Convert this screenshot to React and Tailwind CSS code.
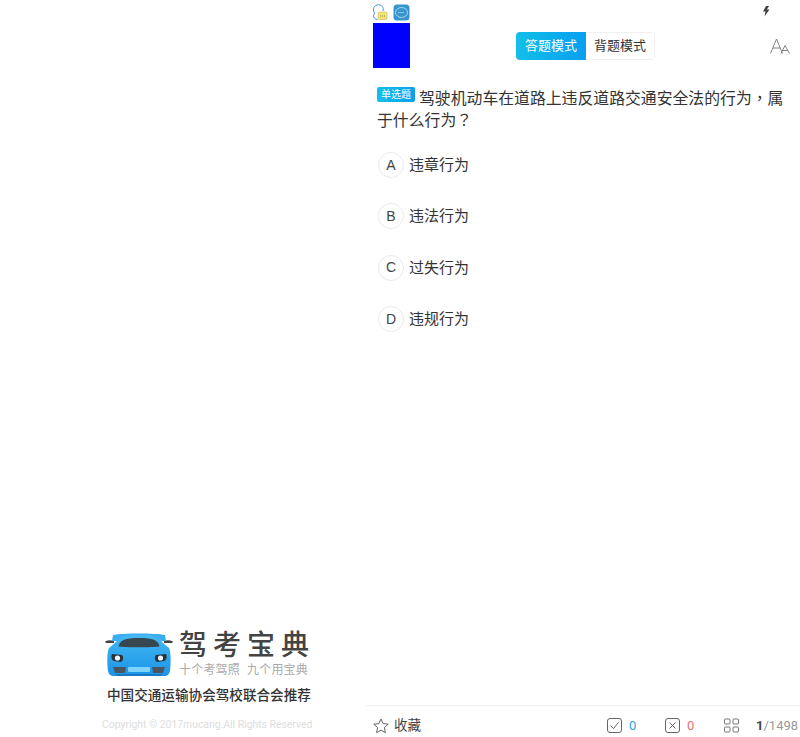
import React from 'react';

const FONT = "font-['Roboto','Noto_Sans_CJK_SC',sans-serif]";

const options = [
  { key: 'A', text: '违章行为' },
  { key: 'B', text: '违法行为' },
  { key: 'C', text: '过失行为' },
  { key: 'D', text: '违规行为' },
];

function CarLogo() {
  return (
    <svg width="68" height="44" viewBox="0 0 68 44" className="mt-px shrink-0">
      <defs>
        <linearGradient id="carBody" x1="0" y1="0" x2="0" y2="1">
          <stop offset="0" stopColor="#45b8f5" />
          <stop offset="1" stopColor="#1a94e6" />
        </linearGradient>
      </defs>
      <path d="M0 8.5 C3 7 6 7 9 8 L9 10 L1 10 Z" fill="#444" />
      <path d="M68 8.5 C65 7 62 7 59 8 L59 10 L67 10 Z" fill="#444" />
      <path d="M8 2 C18 0 50 0 60 2 L61 8 L7 8 Z" fill="#3aaef0" />
      <path d="M11 9 C13 3 20 2 34 2 C48 2 55 3 57 9 L64 15 C66 19 66 30 65 38 C64 42 62 43 59 43 L9 43 C6 43 4 42 3 38 C2 30 2 19 4 15 Z" fill="url(#carBody)" />
      <path d="M13.5 13.5 C15 7 20 5 34 5 C48 5 53 7 54.5 13.5 C48 14.5 20 14.5 13.5 13.5 Z" fill="#37474f" />
      <path d="M7 21 L17 22 C19 24 18 28 16 29 L9 28 C6 27 6 23 7 21 Z" fill="#28323a" />
      <circle cx="12.5" cy="25" r="2.6" fill="#f1f5f7" />
      <path d="M61 21 L51 22 C49 24 50 28 52 29 L59 28 C62 27 62 23 61 21 Z" fill="#28323a" />
      <circle cx="55.5" cy="25" r="2.6" fill="#f1f5f7" />
      <path d="M8 34 L21 34 L20 40 L10 40 Z" fill="#4a5560" />
      <path d="M60 34 L47 34 L48 40 L58 40 Z" fill="#4a5560" />
      <rect x="23" y="34" width="22" height="5" rx="1" fill="#7fd2fa" />
      <path d="M10 41 L58 41 L56 43 L12 43 Z" fill="#1679c4" />
    </svg>
  );
}

function HeadsetIcon() {
  return (
    <svg width="16" height="17" viewBox="0 0 16 17" fill="none">
      <path d="M2.5 9 C0 5 2 0.8 6.5 0.8 C10 0.8 12 3.5 11 7" stroke="#3f8fe8" strokeWidth="1" />
      <path d="M2.5 9 C1 12 1 15 5.5 15.5" stroke="#3f8fe8" strokeWidth="1" />
      <rect x="6" y="8" width="9" height="7.5" rx="1.5" fill="#f5e27a" stroke="#c9b84e" strokeWidth="0.6" />
      <path d="M8 12 H13" stroke="#8f8a3a" strokeWidth="1" strokeDasharray="1 1" />
    </svg>
  );
}

function AppIcon() {
  return (
    <svg width="17" height="17" viewBox="0 0 17 17" fill="none">
      <rect x="0.5" y="0.5" width="16" height="16" rx="3.5" fill="#3794cc" />
      <ellipse cx="8.5" cy="8.5" rx="6" ry="5" stroke="#a8dcf2" strokeWidth="1" />
      <path d="M5.5 8.5 H11.5" stroke="#e5f6fc" strokeWidth="1" strokeDasharray="1 1" />
    </svg>
  );
}

function FontSizeIcon() {
  return (
    <svg width="20" height="16" viewBox="0 0 20 16" fill="none" stroke="#666" strokeWidth="0.8">
      <path d="M0.5 15.5 L6.5 1 L12.5 15.5 M3 10 H10.5" />
      <path d="M11 15.5 L15 7.5 L19.5 15.5 M12.8 12.5 H18" />
    </svg>
  );
}

function Star() {
  return (
    <svg width="16" height="16" viewBox="0 0 16 16" fill="none" stroke="#555" strokeWidth="0.9" strokeLinejoin="round">
      <path d="M8 1 L10.1 5.6 L15.2 6.2 L11.4 9.6 L12.4 14.7 L8 12.1 L3.6 14.7 L4.6 9.6 L0.8 6.2 L5.9 5.6 Z" />
    </svg>
  );
}

function BoxIcon({ kind }) {
  return (
    <svg width="15" height="15" viewBox="0 0 15 15" fill="none" stroke="#555" strokeWidth="0.9">
      <rect x="0.5" y="0.5" width="14" height="14" rx="2.5" />
      {kind === 'check' ? <path d="M3.5 7.5 L6.5 10.5 L11.5 4.5" /> : <path d="M4.5 4.5 L10.5 10.5 M10.5 4.5 L4.5 10.5" />}
    </svg>
  );
}

function GridIcon() {
  return (
    <svg width="15" height="15" viewBox="0 0 15 15" fill="none" stroke="#666" strokeWidth="0.9">
      <rect x="0.5" y="1" width="5.5" height="5" rx="1" />
      <rect x="9" y="1" width="5.5" height="5" rx="1" />
      <rect x="0.5" y="9" width="5.5" height="5" rx="1" />
      <rect x="9" y="9" width="5.5" height="5" rx="1" />
    </svg>
  );
}

// centred punctuation, as in the reference
function Punct({ children }) {
  return <span className="font-['Noto_Sans_CJK_TC',sans-serif] leading-none">{children}</span>;
}

function App() {
  return (
    <div className={`${FONT} flex h-[737px] w-[800px] overflow-hidden bg-white`}>
      {/* Left: brand */}
      <div className="flex w-[366px] shrink-0 flex-col justify-end pb-[4px] pl-[102px]">
        <div className="flex w-[210px] flex-col items-end">
          <div className="flex w-[207px] items-start gap-[6px]">
            <CarLogo />
            <div className="flex flex-col">
              <div className="h-[29px] whitespace-nowrap text-[28px] font-medium leading-[28px] tracking-[6px] text-[#444]">驾考宝典</div>
              <div className="flex whitespace-nowrap text-[12px] leading-[18px] tracking-[0.2px] text-[#aaa]">
                <span>十个考驾照</span>
                <span className="ml-[7px]">九个用宝典</span>
              </div>
            </div>
          </div>
          <div className="mt-[5px] w-[207px] whitespace-nowrap pl-[2px] text-[13.6px] font-medium leading-[22px] text-[#333]">中国交通运输协会驾校联合会推荐</div>
          <div className="mt-[11px] w-[210px] whitespace-nowrap text-[10.4px] leading-[16px] text-[#ddd]">Copyright © 2017mucang.All Rights Reserved</div>
        </div>
      </div>

      {/* Right: question */}
      <div className="flex flex-1 flex-col">
        <div className="flex h-[23px] items-start justify-between pl-[6px] pr-[30px] pt-[4px]">
          <div className="flex items-center gap-[5px]">
            <HeadsetIcon />
            <AppIcon />
          </div>
          <svg width="8" height="11" viewBox="0 0 8 11" className="mt-[2px]">
            <path d="M4 0 H7 L5 3.5 H7.5 L2.5 10.5 L3.5 5.5 H1 Z" fill="#444" />
          </svg>
        </div>

        <div className="flex h-[45px] items-start pl-[7px] pr-[10px]">
          <div className="h-[45px] w-[37px] bg-[#0000ff]" />
          <div className="ml-[106px] mt-[9px] flex h-[28px] w-[139px] overflow-hidden rounded-[4px] text-[13px]">
            <div className="flex w-[70px] items-center justify-center bg-gradient-to-r from-[#14bfe8] to-[#0a9ff0] text-white">答题模式</div>
            <div className="flex flex-1 items-center justify-center rounded-r-[4px] border-y border-r border-[#f0f0f0] bg-white text-[#333]">背题模式</div>
          </div>
          <div className="ml-auto mt-[15px]">
            <FontSizeIcon />
          </div>
        </div>

        <div className="mt-[20px] pl-[11px] pr-[10px] text-[15.85px] leading-[22px] text-[#333]">
          <span className="relative top-[-1px] mr-[4px] inline-block h-[15px] w-[38px] rounded-[2px] bg-gradient-to-r from-[#14bfe8] to-[#0a9ff0] text-center align-top text-[10px] leading-[15px] text-white">单选题</span>
          驾驶机动车在道路上违反道路交通安全法的行为<Punct>，</Punct>属于什么行为<Punct>？</Punct>
        </div>

        <div className="mt-[20px] flex flex-col gap-[25.4px] pl-[12px]">
          {options.map((o) => (
            <div key={o.key} className="flex h-[26px] items-center gap-[5px]">
              <div className="flex h-[26px] w-[26px] items-center justify-center rounded-full border border-[#eaeaea] font-['Liberation_Sans',sans-serif] text-[14px] text-[#444]">{o.key}</div>
              <div className="text-[15px] text-[#333]">{o.text}</div>
            </div>
          ))}
        </div>

        {/* Bottom bar */}
        <div className="mt-auto flex h-[32px] items-center border-t border-[#eeeeee] pl-[7px] pt-[8px] text-[14px]">
          <Star />
          <span className="ml-[5px] whitespace-nowrap text-[13.5px] text-[#444]">收藏</span>
          <div className="ml-[186px] flex items-center gap-[7px]">
            <BoxIcon kind="check" />
            <span className="w-[7px] text-[13px] text-[#2ba4dc]">0</span>
          </div>
          <div className="ml-[29px] flex items-center gap-[7px]">
            <BoxIcon kind="x" />
            <span className="w-[7px] text-[13px] text-[#e6707a]">0</span>
          </div>
          <div className="ml-[30px]">
            <GridIcon />
          </div>
          <div className="ml-[17px] whitespace-nowrap text-[13px] text-[#999]">
            <span className="font-bold text-[#444]">1</span>/1498
          </div>
        </div>
      </div>
    </div>
  );
}

export default App;
